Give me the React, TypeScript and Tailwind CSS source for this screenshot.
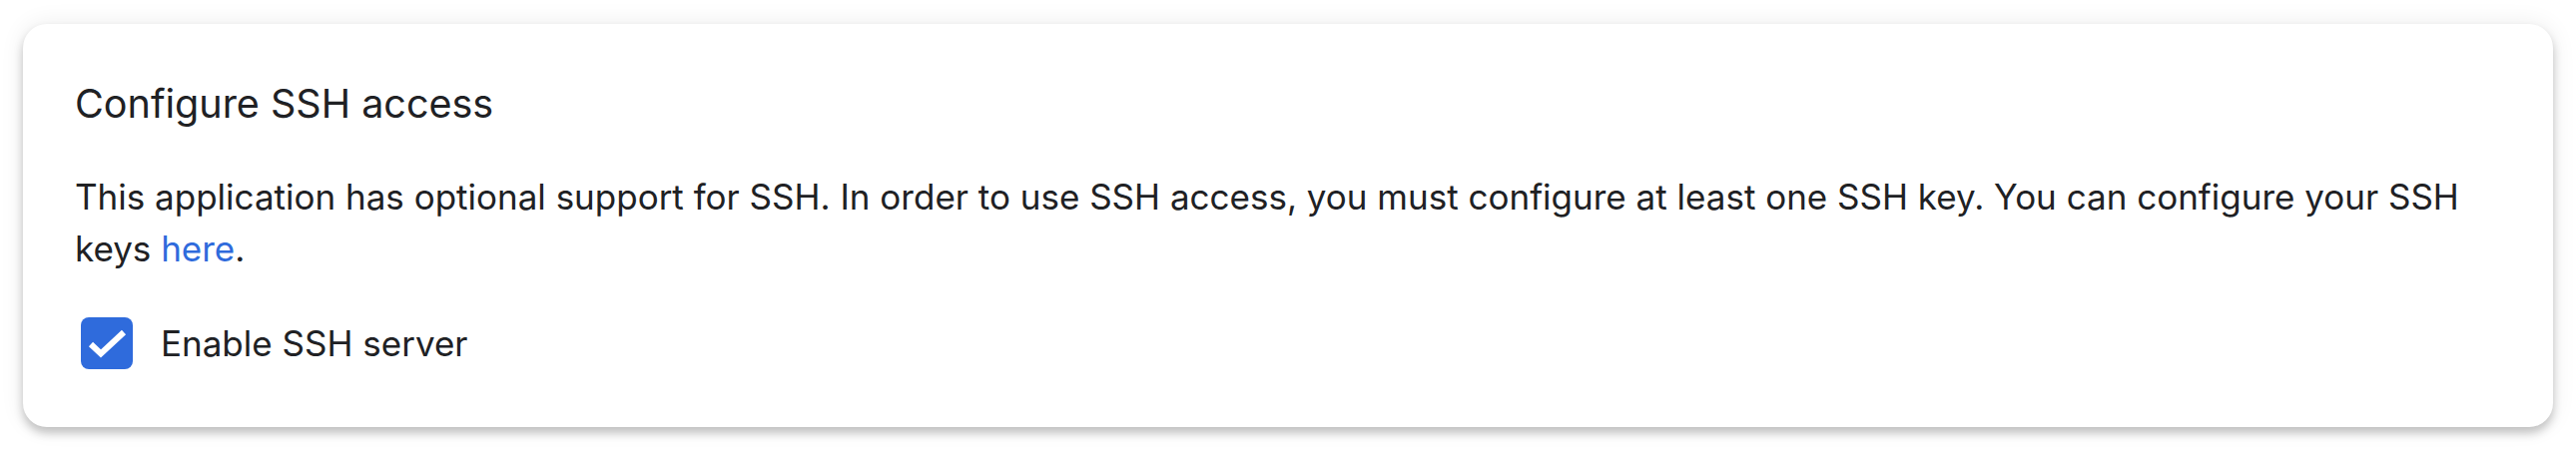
import React from 'react';

const App = () => {
  return (
    <main className="min-h-screen bg-white px-[23px] pt-[24px] pb-[28px] font-['Inter',sans-serif] text-[#202124]">
      <section className="rounded-[24px] bg-white pl-[52px] pr-[80px] pt-[56px] pb-[58px] shadow-[0_6px_10px_rgba(0,0,0,0.22),0_0_24px_rgba(0,0,0,0.08)]">
        <h2 className="text-[39.5px] leading-[48px] font-normal">Configure SSH access</h2>
        <p className="mt-[43px] text-[35px] leading-[52px]">
          This application has optional support for SSH. In order to use SSH access, you must configure at least one SSH key. You can configure your SSH keys{' '}
          <a href="#" className="text-[#2f6bdc]">here</a>.
        </p>
        <label className="mt-[43px] flex items-center gap-[28px] pl-[6px]">
          <span className="h-[52px] w-[52px] rounded-[8px] bg-[#2f6bdc]">
            <svg className="h-[52px] w-[52px]" viewBox="0 0 52 52" fill="none" stroke="white" strokeWidth="6" strokeLinecap="butt" strokeLinejoin="miter">
              <path d="M10 27l10 9.5L43 15" />
            </svg>
          </span>
          <span className="text-[35px] leading-[52px]">Enable SSH server</span>
        </label>
      </section>
    </main>
  );
};

export default App;
